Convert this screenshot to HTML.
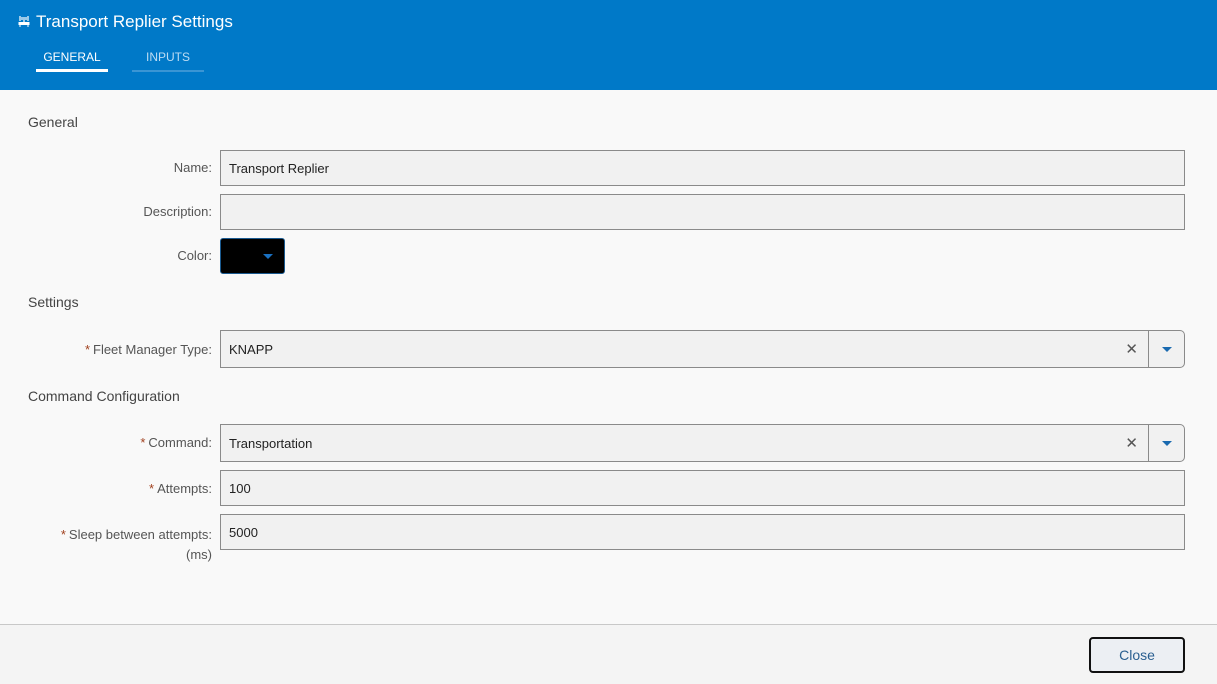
<!DOCTYPE html><html><head><style>
body{margin:0;width:1217px;height:683px;background:#f9f9f9;font-family:"Liberation Sans",sans-serif;position:relative;overflow:hidden}
.a{position:absolute}
.hd{left:0;top:0;width:1217px;height:90px;background:#0079c8}
.lbl{right:1005px;font-size:13px;color:#555;text-align:right;line-height:16px}
.st{color:#a0401e;margin-right:3px}
.in{left:220px;width:965px;background:#f1f1f1;border:1px solid #8a8a8a;font-size:13px;color:#222;box-sizing:border-box;padding-left:8px;display:flex;align-items:center}
.sec{left:28px;font-size:14px;color:#444}
.x{position:absolute;right:46px;color:#555;font-size:15px}
.dd{position:absolute;right:0;top:0;bottom:0;width:35px;border-left:1px solid #8a8a8a}
.tri{position:absolute;left:13px;top:16px;width:0;height:0;border-left:5px solid transparent;border-right:5px solid transparent;border-top:5px solid #1a6ab0}
</style></head><body>
<div class="a hd"></div>
<svg class="a" style="left:18px;top:14px" width="12" height="14" viewBox="0 0 12 14"><g fill="none" stroke="#fff" stroke-width="1.2"><path d="M2 2v5M10 2v5M4 3v3M8 3v3M6 3v6"/></g><rect x="0.5" y="8" width="11" height="3" fill="#fff"/><path d="M2 11v2M10 11v2" stroke="#fff"/></svg>
<div class="a" style="left:36px;top:12px;font-size:17px;color:#fff">Transport Replier Settings</div>
<div class="a" style="left:36px;top:50px;width:72px;text-align:center;font-size:12px;color:#fff">GENERAL</div>
<div class="a" style="left:36px;top:69px;width:72px;height:3px;background:#fff"></div>
<div class="a" style="left:132px;top:50px;width:72px;text-align:center;font-size:12px;color:#bcdcf3">INPUTS</div>
<div class="a" style="left:132px;top:70px;width:72px;height:2px;background:#3a95d4"></div>

<div class="a sec" style="top:114px">General</div>
<div class="a lbl" style="top:160px">Name:</div>
<div class="a in" style="top:150px;height:36px">Transport Replier</div>
<div class="a lbl" style="top:204px">Description:</div>
<div class="a in" style="top:194px;height:36px"></div>
<div class="a lbl" style="top:248px">Color:</div>
<div class="a" style="left:220px;top:238px;width:65px;height:36px;background:#000;border:1px solid #1a5a90;box-sizing:border-box;border-radius:3px"><div class="tri" style="left:42px;top:15px;border-top-color:#1a70c0"></div></div>

<div class="a sec" style="top:294px">Settings</div>
<div class="a lbl" style="top:342px"><span class="st">*</span>Fleet Manager Type:</div>
<div class="a in" style="top:330px;height:38px;border-radius:0 5px 5px 0">KNAPP<span class="x">✕</span><div class="dd"><div class="tri"></div></div></div>

<div class="a sec" style="top:388px">Command Configuration</div>
<div class="a lbl" style="top:435px"><span class="st">*</span>Command:</div>
<div class="a in" style="top:424px;height:38px;border-radius:0 5px 5px 0">Transportation<span class="x">✕</span><div class="dd"><div class="tri"></div></div></div>
<div class="a lbl" style="top:481px"><span class="st">*</span>Attempts:</div>
<div class="a in" style="top:470px;height:36px">100</div>
<div class="a lbl" style="top:525px;line-height:20px"><span class="st">*</span>Sleep between attempts:<br>(ms)</div>
<div class="a in" style="top:514px;height:36px">5000</div>

<div class="a" style="left:0;top:624px;width:1217px;height:59px;background:#f4f4f4;border-top:1px solid #c8c8c8"></div>
<div class="a" style="left:1089px;top:637px;width:96px;height:36px;box-sizing:border-box;border:2px solid #111;border-radius:4px;background:#eceff3;color:#2a5f90;font-size:14px;text-align:center;line-height:32px">Close</div>
</body></html>
